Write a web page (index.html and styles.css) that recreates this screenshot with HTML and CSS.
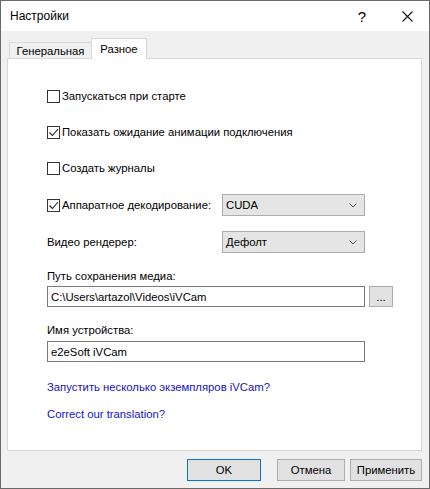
FILE: index.html
```html
<!DOCTYPE html>
<html lang="ru">
<head>
  <meta charset="UTF-8">
  <title>Настройки</title>
  <link rel="stylesheet" href="styles.css">
</head>
<body>
  <div class="window">
    <div class="titlebar">
      <span class="title">Настройки</span>
      <span class="help">?</span>
      <span class="close">
        <svg width="11" height="11" viewBox="0 0 11 11"><path d="M0.5 0.5L10.5 10.5M10.5 0.5L0.5 10.5" stroke="#111" stroke-width="1.1" fill="none"/></svg>
      </span>
    </div>

    <div class="client">
      <div class="tabs">
        <div class="tab">Генеральная</div>
        <div class="tab active">Разное</div>
      </div>

      <div class="panel">
        <label class="check-row first">
          <span class="box"></span>
          <span>Запускаться при старте</span>
        </label>
        <label class="check-row">
          <span class="box"><svg width="11" height="11" viewBox="0 0 11 11"><path d="M1.5 5.5L4.5 8.5L10 2" stroke="#222" stroke-width="1.1" fill="none"/></svg></span>
          <span>Показать ожидание анимации подключения</span>
        </label>
        <label class="check-row">
          <span class="box"></span>
          <span>Создать журналы</span>
        </label>

        <div class="combo-row">
          <label class="check-row inline">
            <span class="box"><svg width="11" height="11" viewBox="0 0 11 11"><path d="M1.5 5.5L4.5 8.5L10 2" stroke="#222" stroke-width="1.1" fill="none"/></svg></span>
            <span>Аппаратное декодирование:</span>
          </label>
          <div class="combo">
            <span>CUDA</span>
            <svg width="8" height="5" viewBox="0 0 8 5"><path d="M0.5 0.5L4 4L7.5 0.5" stroke="#555" fill="none"/></svg>
          </div>
        </div>

        <div class="combo-row second">
          <span class="plain">Видео рендерер:</span>
          <div class="combo">
            <span>Дефолт</span>
            <svg width="8" height="5" viewBox="0 0 8 5"><path d="M0.5 0.5L4 4L7.5 0.5" stroke="#555" fill="none"/></svg>
          </div>
        </div>

        <div class="field-label path-label">Путь сохранения медиа:</div>
        <div class="path-row">
          <div class="textbox path">C:\Users\artazol\Videos\iVCam</div>
          <button class="btn browse">...</button>
        </div>

        <div class="field-label name-label">Имя устройства:</div>
        <div class="textbox name">e2eSoft iVCam</div>

        <a class="link first-link" href="#">Запустить несколько экземпляров iVCam?</a>
        <a class="link" href="#">Correct our translation?</a>
      </div>

      <div class="actions">
        <button class="btn default">OK</button>
        <button class="btn cancel">Отмена</button>
        <button class="btn apply">Применить</button>
      </div>
    </div>
  </div>
</body>
</html>
```

FILE: styles.css
```css
body {
  margin: 0;
  font-family: "Liberation Sans", Arial, sans-serif;
  font-size: 11.3px;
  color: #000;
}
.window {
  width: 430px;
  height: 489px;
  box-sizing: border-box;
  border: 1px solid #6a6a6a;
  background: #f0f0f0;
  display: flex;
  flex-direction: column;
  white-space: nowrap;
}
.titlebar {
  height: 30px;
  background: #fff;
  display: flex;
  align-items: center;
}
.title {
  padding-left: 9px;
  font-size: 12px;
}
.help {
  margin-left: auto;
  margin-right: 36px;
  font-size: 15px;
  line-height: 15px;
}
.close {
  display: flex;
  margin-right: 16px;
}
.client {
  flex: 1;
  padding: 7px 7px 0 6px;
}
.tabs {
  display: flex;
  height: 21px;
  margin-bottom: -1px;
  padding-left: 2px;
}
.tab {
  box-sizing: border-box;
  border: 1px solid #d9d9d9;
  border-bottom: none;
  background: #f0f0f0;
  height: 16px;
  margin-top: auto;
  margin-bottom: 1px;
  width: 83px;
  display: flex;
  align-items: center;
  justify-content: center;
  line-height: 14px;
}
.tab.active {
  background: #fff;
  height: 21px;
  width: 56px;
  margin-bottom: 0;
  margin-left: -1px;
  position: relative;
  z-index: 1;
  padding-bottom: 1px;
}
.panel {
  box-sizing: border-box;
  height: 393px;
  border: 1px solid #d9d9d9;
  background: #fff;
  padding: 26px 0 0 39px;
  display: flex;
  flex-direction: column;
  align-items: flex-start;
}
.check-row {
  display: flex;
  align-items: center;
  height: 22px;
  margin-bottom: 14px;
}
.check-row.inline {
  margin-bottom: 0;
  width: 175px;
}
.box {
  box-sizing: border-box;
  width: 13px;
  height: 13px;
  border: 1px solid #333;
  background: #fff;
  margin-right: 2px;
  display: flex;
}
.combo-row {
  display: flex;
  align-items: center;
  height: 22px;
  margin-top: 1px;
}
.combo-row.second {
  margin-top: 15px;
}
.plain {
  width: 175px;
}
.combo {
  box-sizing: border-box;
  width: 143px;
  height: 22px;
  border: 1px solid #acacac;
  background: #e5e5e5;
  display: flex;
  align-items: center;
  justify-content: space-between;
  padding: 0 7px 0 3px;
}
.field-label {
  height: 16px;
  line-height: 16px;
}
.path-label {
  margin-top: 15px;
}
.name-label {
  margin-top: 15px;
}
.path-row {
  display: flex;
  margin-top: 2px;
}
.textbox {
  box-sizing: border-box;
  height: 21px;
  border: 1px solid #7a7a7a;
  background: #fff;
  padding-left: 3px;
  display: flex;
  align-items: center;
}
.textbox.path {
  width: 318px;
}
.textbox.name {
  width: 318px;
  margin-top: 3px;
}
.btn {
  box-sizing: border-box;
  font-family: "Liberation Sans", Arial, sans-serif;
  font-size: 11.3px;
  color: #000;
  background: #e1e1e1;
  border: 1px solid #adadad;
  padding: 0;
  height: 22px;
}
.browse {
  width: 24px;
  height: 21px;
  margin-left: 4px;
  line-height: 14px;
}
.link {
  color: #1414c4;
  text-decoration: none;
  line-height: 16px;
}
.first-link {
  margin-top: 17px;
  margin-bottom: 11px;
}
.actions {
  display: flex;
  justify-content: flex-end;
  padding: 8px 0 0 0;
}
.default {
  width: 74px;
  border-color: #0078d7;
  margin-right: 16px;
}
.cancel {
  width: 68px;
  margin-right: 5px;
}
.apply {
  width: 72px;
}
```
